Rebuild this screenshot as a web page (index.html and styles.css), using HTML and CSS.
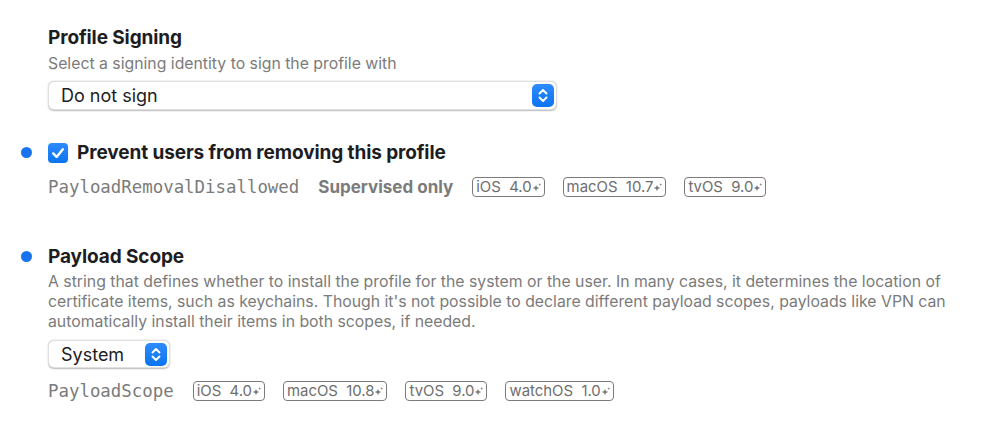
FILE: index.html
```html
<!DOCTYPE html>
<html>
<head>
<meta charset="utf-8">
<link rel="stylesheet" href="styles.css">
</head>
<body>
<div class="page">
  <section class="item first">
    <div class="gutter"></div>
    <div class="body">
      <h2 class="title">Profile Signing</h2>
      <p class="desc">Select a signing identity to sign the profile with</p>
      <div class="popup wide">
        <span class="popup-label">Do not sign</span>
        <span class="stepper">
          <svg width="22" height="23" viewBox="0 0 22 23"><path d="M7.5 9.5 L11 6 L14.5 9.5 M7.5 13.5 L11 17 L14.5 13.5" fill="none" stroke="#fff" stroke-width="1.9" stroke-linecap="round" stroke-linejoin="round"/></svg>
        </span>
      </div>
    </div>
  </section>

  <section class="item second">
    <div class="gutter"><span class="dot"></span></div>
    <div class="body">
      <div class="check-row">
        <span class="checkbox">
          <svg width="20" height="20" viewBox="0 0 20 20"><path d="M5.2 10.4 L8.6 13.9 L14.8 6.2" fill="none" stroke="#fff" stroke-width="2.4" stroke-linecap="round" stroke-linejoin="round"/></svg>
        </span>
        <span class="title">Prevent users from removing this profile</span>
      </div>
    </div>
    <div class="gutter"></div>
    <div class="body">
      <div class="meta-row">
        <span class="key">PayloadRemovalDisallowed</span>
        <span class="supervised">Supervised only</span>
        <span class="badge">iOS&nbsp;&nbsp;4.0<svg class="spark" viewBox="0 0 10 10"><path d="M4 2.4 L4.9 4.6 L7.2 5.5 L4.9 6.4 L4 8.8 L3.1 6.4 L0.8 5.5 L3.1 4.6 Z" fill="#777"/><path d="M7.8 0.6 L8.2 1.7 L9.3 2.1 L8.2 2.5 L7.8 3.6 L7.4 2.5 L6.3 2.1 L7.4 1.7 Z" fill="#777"/></svg></span>
        <span class="badge">macOS&nbsp;&nbsp;10.7<svg class="spark" viewBox="0 0 10 10"><path d="M4 2.4 L4.9 4.6 L7.2 5.5 L4.9 6.4 L4 8.8 L3.1 6.4 L0.8 5.5 L3.1 4.6 Z" fill="#777"/><path d="M7.8 0.6 L8.2 1.7 L9.3 2.1 L8.2 2.5 L7.8 3.6 L7.4 2.5 L6.3 2.1 L7.4 1.7 Z" fill="#777"/></svg></span>
        <span class="badge">tvOS&nbsp;&nbsp;9.0<svg class="spark" viewBox="0 0 10 10"><path d="M4 2.4 L4.9 4.6 L7.2 5.5 L4.9 6.4 L4 8.8 L3.1 6.4 L0.8 5.5 L3.1 4.6 Z" fill="#777"/><path d="M7.8 0.6 L8.2 1.7 L9.3 2.1 L8.2 2.5 L7.8 3.6 L7.4 2.5 L6.3 2.1 L7.4 1.7 Z" fill="#777"/></svg></span>
      </div>
    </div>
  </section>

  <section class="item third">
    <div class="gutter"><span class="dot"></span></div>
    <div class="body">
      <h2 class="title">Payload Scope</h2>
    </div>
    <div class="gutter"></div>
    <div class="body">
      <p class="desc long">A string that defines whether to install the profile for the system or the user. In many cases, it determines the location of certificate items, such as keychains. Though it's not possible to declare different payload scopes, payloads like VPN can automatically install their items in both scopes, if needed.</p>
      <div class="popup narrow">
        <span class="popup-label">System</span>
        <span class="stepper">
          <svg width="22" height="23" viewBox="0 0 22 23"><path d="M7.5 9.5 L11 6 L14.5 9.5 M7.5 13.5 L11 17 L14.5 13.5" fill="none" stroke="#fff" stroke-width="1.9" stroke-linecap="round" stroke-linejoin="round"/></svg>
        </span>
      </div>
      <div class="meta-row">
        <span class="key">PayloadScope</span>
        <span class="badge">iOS&nbsp;&nbsp;4.0<svg class="spark" viewBox="0 0 10 10"><path d="M4 2.4 L4.9 4.6 L7.2 5.5 L4.9 6.4 L4 8.8 L3.1 6.4 L0.8 5.5 L3.1 4.6 Z" fill="#777"/><path d="M7.8 0.6 L8.2 1.7 L9.3 2.1 L8.2 2.5 L7.8 3.6 L7.4 2.5 L6.3 2.1 L7.4 1.7 Z" fill="#777"/></svg></span>
        <span class="badge">macOS&nbsp;&nbsp;10.8<svg class="spark" viewBox="0 0 10 10"><path d="M4 2.4 L4.9 4.6 L7.2 5.5 L4.9 6.4 L4 8.8 L3.1 6.4 L0.8 5.5 L3.1 4.6 Z" fill="#777"/><path d="M7.8 0.6 L8.2 1.7 L9.3 2.1 L8.2 2.5 L7.8 3.6 L7.4 2.5 L6.3 2.1 L7.4 1.7 Z" fill="#777"/></svg></span>
        <span class="badge">tvOS&nbsp;&nbsp;9.0<svg class="spark" viewBox="0 0 10 10"><path d="M4 2.4 L4.9 4.6 L7.2 5.5 L4.9 6.4 L4 8.8 L3.1 6.4 L0.8 5.5 L3.1 4.6 Z" fill="#777"/><path d="M7.8 0.6 L8.2 1.7 L9.3 2.1 L8.2 2.5 L7.8 3.6 L7.4 2.5 L6.3 2.1 L7.4 1.7 Z" fill="#777"/></svg></span>
        <span class="badge">watchOS&nbsp;&nbsp;1.0<svg class="spark" viewBox="0 0 10 10"><path d="M4 2.4 L4.9 4.6 L7.2 5.5 L4.9 6.4 L4 8.8 L3.1 6.4 L0.8 5.5 L3.1 4.6 Z" fill="#777"/><path d="M7.8 0.6 L8.2 1.7 L9.3 2.1 L8.2 2.5 L7.8 3.6 L7.4 2.5 L6.3 2.1 L7.4 1.7 Z" fill="#777"/></svg></span>
      </div>
    </div>
  </section>
</div>
</body>
</html>
```
FILE: styles.css
```css
* { box-sizing: border-box; }
html, body {
  margin: 0;
  padding: 0;
  background: #ffffff;
}
body {
  font-family: Inter, "Noto Sans", "Liberation Sans", sans-serif;
  color: #1d1d1f;
  width: 999px;
  height: 435px;
  overflow: hidden;
}
.page {
  padding-top: 27px;
}
.item {
  display: grid;
  grid-template-columns: 48px 1fr;
}
.dot {
  display: block;
  width: 11px;
  height: 11px;
  border-radius: 50%;
  background: #1a73ee;
  margin-left: 21px;
}
.title {
  margin: 0;
  font-size: 19px;
  line-height: 22px;
  font-weight: 700;
  color: #1d1d1f;
  letter-spacing: -0.1px;
}
.desc {
  margin: 5px 0 0;
  font-size: 15.8px;
  line-height: 20px;
  color: #7b7b7b;
}
.desc.long {
  width: 940px;
  margin-top: 4px;
}
.popup {
  display: flex;
  align-items: center;
  justify-content: space-between;
  height: 29px;
  background: #fff;
  border-radius: 6px;
  border: 0.5px solid rgba(0,0,0,0.12);
  box-shadow: 0 0.5px 1.5px rgba(0,0,0,0.28);
  padding: 0 2px 0 12px;
}
.popup.wide {
  width: 509px;
  margin-top: 7px;
}
.popup.narrow {
  width: 122px;
  margin-top: 8px;
  height: 28px;
}
.popup-label {
  font-size: 18px;
  color: #1d1d1f;
}
.stepper {
  display: flex;
  width: 22px;
  height: 23px;
  border-radius: 5px;
  background: linear-gradient(#2f8bff, #0a74f0);
}
.second {
  margin-top: 32px;
}
.second .dot {
  margin-top: 5px;
}
.check-row {
  display: flex;
  align-items: center;
  gap: 9px;
  height: 22px;
}
.checkbox {
  display: flex;
  width: 20px;
  height: 20px;
  border-radius: 4px;
  background: linear-gradient(#2f8bff, #0a74f0);
}
.meta-row {
  display: flex;
  align-items: center;
  height: 22px;
  margin-top: 12px;
}
.third .meta-row {
  margin-top: 12px;
}
.key {
  font-family: "DejaVu Sans Mono", "Liberation Mono", monospace;
  font-size: 17.4px;
  color: #7b7b7b;
  margin-right: 19px;
}
.supervised {
  font-size: 17px;
  font-weight: 700;
  color: #7b7b7b;
  margin-right: 19px;
}
.badge {
  display: inline-flex;
  align-items: center;
  height: 20px;
  padding: 0 2px 0 3px;
  border: 1.3px solid #7b7b7b;
  border-radius: 4px;
  font-size: 14.9px;
  color: #6e6e6e;
  margin-right: 18px;
  white-space: nowrap;
}
.spark {
  width: 10px;
  height: 11px;
  margin-left: 0;
}
.third {
  margin-top: 48px;
}
.third .dot {
  margin-top: 5px;
}
```
